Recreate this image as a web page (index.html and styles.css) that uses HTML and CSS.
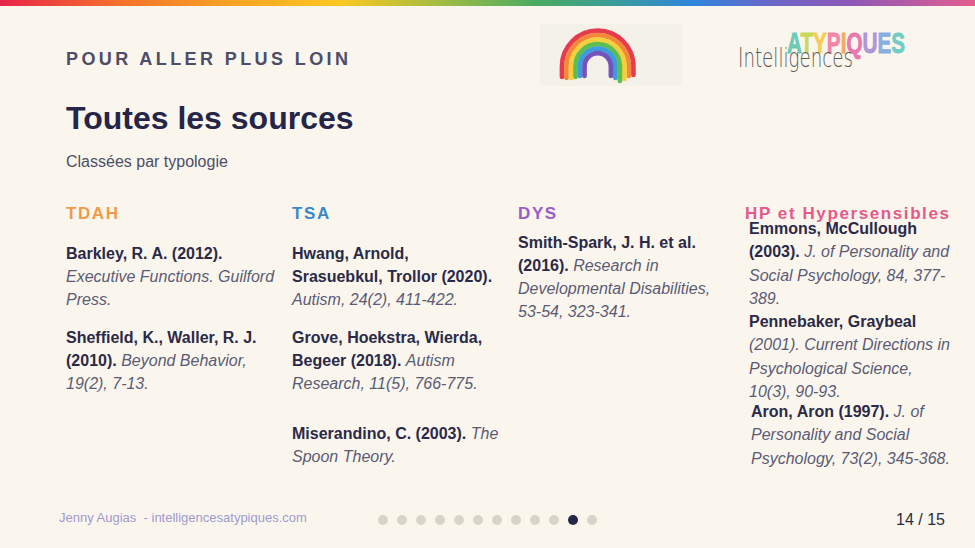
FILE: index.html
```html
<!DOCTYPE html>
<html lang="fr">
<head>
<meta charset="utf-8">
<title>Toutes les sources</title>
<link rel="stylesheet" href="styles.css">
</head>
<body>
<div class="topbar"></div>
<div class="slide">
  <header class="header">
    <div class="kicker">POUR ALLER PLUS LOIN</div>
    <div class="logos">
      <div class="logo logo-rainbow">
        <svg width="142" height="62" viewBox="0 0 142 62">
          <g fill="none" stroke-linecap="round" stroke-width="4.7">
            <path d="M22 53 L22 42.3 A35.7 35.7 0 0 1 93.4 42.3 L93.4 51" stroke="#e63b4f"/>
            <path d="M26.5 54 L26.5 42.3 A31.2 31.2 0 0 1 88.9 42.3 L88.9 52" stroke="#f4873a"/>
            <path d="M31 54 L31 42.3 A26.7 26.7 0 0 1 84.4 42.3 L84.4 55" stroke="#f6cf3c"/>
            <path d="M35.5 53 L35.5 42.3 A22.2 22.2 0 0 1 79.9 42.3 L79.9 57" stroke="#5dbd4e"/>
            <path d="M40 52 L40 42.3 A17.7 17.7 0 0 1 75.4 42.3 L75.4 54" stroke="#3a9ede"/>
            <path d="M44.5 52 L44.5 42.3 A13.2 13.2 0 0 1 70.9 42.3 L70.9 52" stroke="#7453bd"/>
          </g>
        </svg>
      </div>
      <div class="logo logo-ia">
        <svg width="201" height="62" viewBox="0 0 201 62">
          <text x="60" y="29" textLength="118" lengthAdjust="spacingAndGlyphs" class="atyp"><tspan fill="#5cc6b0" stroke="#5cc6b0">A</tspan><tspan fill="#c5d64a" stroke="#c5d64a">T</tspan><tspan fill="#f6c840" stroke="#f6c840">Y</tspan><tspan fill="#f27aa0" stroke="#f27aa0">P</tspan><tspan fill="#f5a050" stroke="#f5a050">I</tspan><tspan fill="#e868a8" stroke="#e868a8">Q</tspan><tspan fill="#a58ad8" stroke="#a58ad8">U</tspan><tspan fill="#78a8e0" stroke="#78a8e0">E</tspan><tspan fill="#62c8c0" stroke="#62c8c0">S</tspan></text>
          <text x="11" y="43" textLength="115" lengthAdjust="spacingAndGlyphs" class="intel">Intelligences</text>
        </svg>
      </div>
    </div>
  </header>

  <h1 class="title">Toutes les sources</h1>
  <p class="subtitle">Classées par typologie</p>

  <div class="columns">
    <section class="col col-tdah">
      <h2 class="col-title">TDAH</h2>
      <p class="ref ref-first"><b>Barkley, R. A. (2012).</b> <i>Executive Functions. Guilford Press.</i></p>
      <p class="ref ref-next"><b>Sheffield, K., Waller, R. J. (2010).</b> <i>Beyond Behavior, 19(2), 7-13.</i></p>
    </section>

    <section class="col col-tsa">
      <h2 class="col-title">TSA</h2>
      <p class="ref ref-first"><b>Hwang, Arnold, Srasuebkul, Trollor (2020).</b> <i>Autism, 24(2), 411-422.</i></p>
      <p class="ref ref-next"><b>Grove, Hoekstra, Wierda, Begeer (2018).</b> <i>Autism Research, 11(5), 766-775.</i></p>
      <p class="ref ref-far"><b>Miserandino, C. (2003).</b> <i>The Spoon Theory.</i></p>
    </section>

    <section class="col col-dys">
      <h2 class="col-title">DYS</h2>
      <p class="ref ref-first"><b>Smith-Spark, J. H. et al. (2016).</b> <i>Research in Developmental Disabilities, 53-54, 323-341.</i></p>
    </section>

    <section class="col col-hp">
      <h2 class="col-title">HP et Hypersensibles</h2>
      <p class="ref ref-first"><b>Emmons, McCullough (2003).</b> <i>J. of Personality and Social Psychology, 84, 377-389.</i></p>
      <p class="ref ref-tight"><b>Pennebaker, Graybeal</b> <i>(2001). Current Directions in Psychological Science, 10(3), 90-93.</i></p>
      <p class="ref ref-last"><b>Aron, Aron (1997).</b> <i>J. of Personality and Social Psychology, 73(2), 345-368.</i></p>
    </section>
  </div>
</div>

<footer class="footer">
  <div class="footer-author">Jenny Augias&nbsp; - intelligencesatypiques.com</div>
  <div class="dots">
    <span class="dot"></span><span class="dot"></span><span class="dot"></span><span class="dot"></span>
    <span class="dot"></span><span class="dot"></span><span class="dot"></span><span class="dot"></span>
    <span class="dot"></span><span class="dot"></span><span class="dot dot-active"></span><span class="dot"></span>
  </div>
  <div class="page-num">14 / 15</div>
</footer>
</body>
</html>
```

FILE: styles.css
```css
* { box-sizing: border-box; }

html, body {
  margin: 0;
  padding: 0;
}

body {
  width: 975px;
  height: 548px;
  overflow: hidden;
  background: #faf6ed;
  font-family: "Liberation Sans", Arial, sans-serif;
  color: #2a2a48;
  display: flex;
  flex-direction: column;
}

.topbar {
  height: 6px;
  flex: none;
  background: linear-gradient(90deg,
    #e8234b 0%,
    #f4702c 12%,
    #f8a424 24%,
    #fbc821 35%,
    #9bbb45 46%,
    #4aab60 55%,
    #3b9c9a 63%,
    #2e86dc 71%,
    #6a66c8 79%,
    #8c58b8 87%,
    #e35d8f 100%);
}

.slide {
  padding: 0 18px 0 66px;
}

.header {
  margin-top: 18px;
  height: 62px;
  padding-right: 29px;
  display: flex;
  align-items: center;
  justify-content: space-between;
}

.kicker {
  margin-top: 7px;
  font-size: 18px;
  line-height: 22px;
  font-weight: 700;
  letter-spacing: 3.4px;
  color: #4d4d68;
}

.logos {
  display: flex;
  gap: 45px;
  height: 62px;
}

.logo {
  height: 62px;
}

.logo svg { display: block; }

.logo-rainbow {
  width: 142px;
  background: #f4f1e9;
}

.logo-ia {
  width: 201px;
}

.atyp {
  font-family: "Liberation Sans", Arial, sans-serif;
  font-weight: 700;
  font-size: 29px;
  fill-opacity: 0.88;
  stroke-opacity: 0.88;
  stroke-width: 0.9px;
}

.intel {
  font-family: "DejaVu Sans", sans-serif;
  font-weight: 200;
  font-size: 26px;
  fill: #5a5a5a;
}

.title {
  margin: 13px 0 0;
  font-size: 32px;
  line-height: 38px;
  font-weight: 700;
  color: #252548;
}

.subtitle {
  margin: 15px 0 0;
  font-size: 16px;
  line-height: 20px;
  color: #4d4d68;
}

.columns {
  margin-top: 32px;
  display: grid;
  grid-template-columns: 210px 210px 211px 1fr;
  column-gap: 16px;
  align-items: start;
}

.col-title {
  margin: 0;
  font-size: 17px;
  line-height: 20px;
  font-weight: 700;
  letter-spacing: 1.6px;
}

.col-tdah .col-title { color: #f29a4a; }
.col-tsa .col-title { color: #3c87c8; }
.col-dys .col-title { color: #9c5bcb; }
.col-hp .col-title { color: #e5598b; }

.ref {
  margin: 0;
  font-size: 16px;
  line-height: 23px;
}

.ref b {
  font-weight: 700;
  color: #2a2a48;
}

.ref i {
  font-style: italic;
  color: #5b5b75;
}

.ref-first { margin-top: 18px; }
.ref-next { margin-top: 15px; }
.ref-far { margin-top: 27px; }

.col-dys .ref-first { margin-top: 7px; }

.col-hp .ref {
  line-height: 23.3px;
  padding-left: 4px;
}
.col-hp .ref-first { margin-top: -7px; }
.col-hp .ref-tight { margin-top: 0; }
.col-hp .ref-last {
  margin-top: -3.3px;
  padding-left: 6px;
}

.footer {
  margin-top: auto;
  margin-bottom: 19px;
  height: 20px;
  padding: 0 30px;
  display: grid;
  grid-template-columns: 1fr auto 1fr;
  align-items: center;
}

.footer-author {
  margin-left: 29px;
  margin-top: -3px;
  font-size: 13px;
  color: #a09ad0;
  white-space: nowrap;
}

.dots {
  display: flex;
  gap: 9px;
  margin-top: 2px;
}

.dot {
  width: 10px;
  height: 10px;
  border-radius: 50%;
  background: #d9d4c7;
}

.dot-active {
  background: #26264a;
}

.page-num {
  justify-self: end;
  margin-top: 2px;
  font-size: 16px;
  color: #2a2a45;
}
```
